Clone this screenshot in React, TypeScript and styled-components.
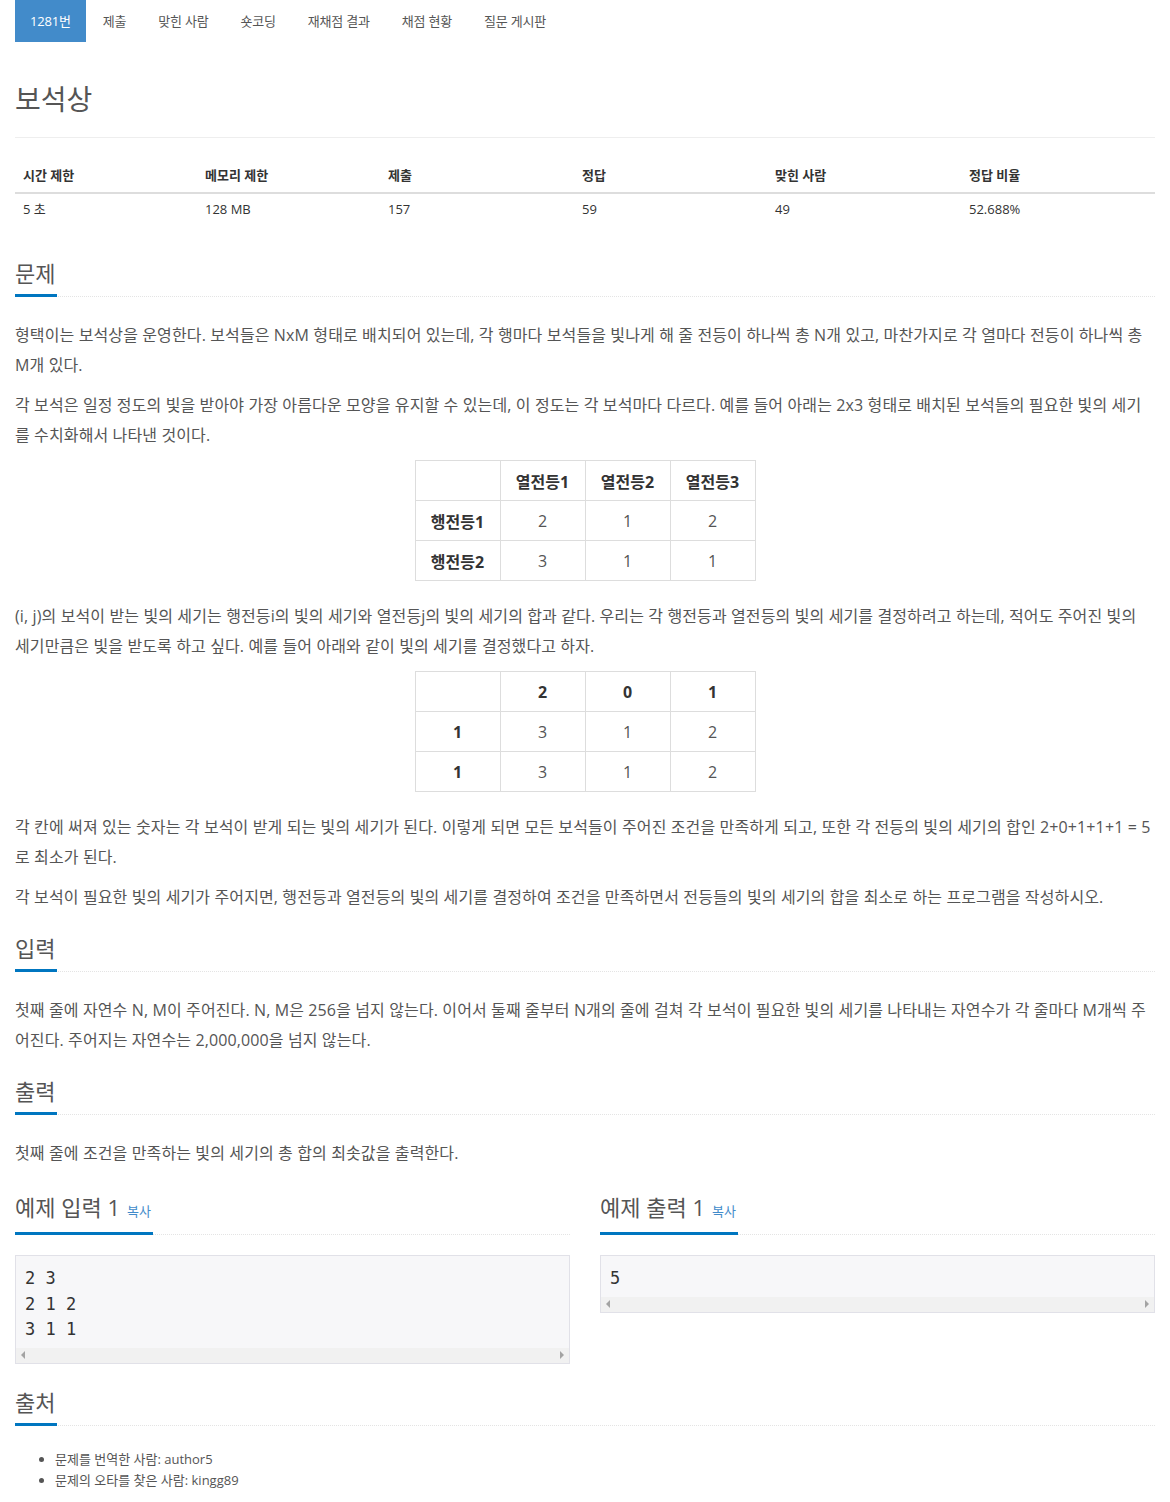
import React from "react";
import styled, { createGlobalStyle } from "styled-components";

const Global = createGlobalStyle`
  html, body { margin: 0; padding: 0; background: #fff; }
  body {
    font-family: "Open Sans", "Noto Sans CJK KR", sans-serif;
    color: #333;
    font-size: 14px;
    overflow: hidden;
  }
  * { box-sizing: border-box; }
`;

const Container = styled.div`
  width: 1170px;
  padding: 0 15px;
`;

const Tabs = styled.ul`
  list-style: none;
  margin: 0;
  padding: 0;
  display: flex;
  gap: 2px;
`;

const Tab = styled.li<{ $active?: boolean }>`
  padding: 10px 15px;
  height: 42px;
  line-height: 22px;
  font-size: 13px;
  letter-spacing: -0.2px;
  color: ${(p) => (p.$active ? "#fff" : "#555")};
  background: ${(p) => (p.$active ? "#428bca" : "transparent")};
`;

const PageHeader = styled.div`
  margin-top: 40px;
  padding-bottom: 21px;
  border-bottom: 1px solid #eee;
  margin-bottom: 20px;
`;

const Title = styled.h1`
  margin: 0;
  font-size: 28px;
  line-height: 34px;
  font-weight: 400;
  color: #555;
`;

const StatsTable = styled.table`
  width: 100%;
  border-collapse: collapse;
  table-layout: fixed;
  margin-bottom: 20px;
  font-size: 13px;
  color: #333;
`;

const StatCol = styled.col<{ $w: number }>`
  width: ${(p) => p.$w}px;
`;

const StatTh = styled.th`
  text-align: left;
  font-weight: 700;
  padding: 8px;
  line-height: 18px;
  border-bottom: 2px solid #ddd;
`;

const StatTd = styled.td`
  padding: 6px 8px 9px;
  line-height: 18px;
`;

const Section = styled.section<{ $gap?: number }>`
  padding-top: ${(p) => p.$gap ?? 16}px;
`;

const Headline = styled.div<{ $space?: number }>`
  border-bottom: 1px dotted #e4e4e4;
  margin-bottom: ${(p) => p.$space ?? 23}px;
  display: flex;
  align-items: flex-end;
`;

const H2 = styled.h2`
  display: inline-block;
  margin: 0 0 -1px;
  font-size: 22px;
  line-height: 22px;
  font-weight: 400;
  color: #555;
  padding: 0 2px 10px 0;
  border-bottom: 3px solid #0076c0;
`;

const Copy = styled.a`
  font-size: 13px;
  color: #428bca;
  text-decoration: none;
  margin-left: 7px;
`;

const Text = styled.p`
  margin: 0 0 10px;
  font-size: 16px;
  line-height: 30px;
  letter-spacing: 0.12px;
  color: #555;
  word-break: break-all;
`;

const DataTable = styled.table`
  border-collapse: collapse;
  margin: 0 auto 20px;
  width: 341px;
  table-layout: fixed;
  font-size: 16px;
  color: #555;
`;

const Cell = styled.td<{ $head?: boolean }>`
  width: 85px;
  height: 40px;
  padding: 0;
  border: 1px solid #ddd;
  text-align: center;
  font-weight: ${(p) => (p.$head ? 700 : 400)};
  color: ${(p) => (p.$head ? "#333" : "#555")};
`;

const SampleRow = styled.div`
  display: grid;
  grid-template-columns: 1fr 1fr;
  column-gap: 30px;
`;

const PreBox = styled.div`
  margin: 0 0 10px;
  background: #f7f7f9;
  border: 1px solid #e1e1e8;
`;

const Pre = styled.pre`
  margin: 0;
  padding: 10px 9px 5px;
  font-family: "DejaVu Sans Mono", monospace;
  font-size: 17px;
  line-height: 25.5px;
  color: #333;
  white-space: pre;
`;

const ScrollTrack = styled.div`
  height: 15px;
  background: #f1f1f1;
  display: flex;
  align-items: center;
  justify-content: space-between;
  padding: 0 5px;
`;

const Arrow = styled.span<{ $dir: "left" | "right" }>`
  width: 0;
  height: 0;
  border-top: 4px solid transparent;
  border-bottom: 4px solid transparent;
  ${(p) =>
    p.$dir === "left"
      ? "border-right: 4px solid #a3a3a3;"
      : "border-left: 4px solid #a3a3a3;"}
`;

const List = styled.ul`
  margin: 0;
  padding-left: 40px;
  font-size: 13px;
  line-height: 21px;
  color: #555;
`;

const tabs = ["1281번", "제출", "맞힌 사람", "숏코딩", "재채점 결과", "채점 현황", "질문 게시판"];
const statHeads = ["시간 제한", "메모리 제한", "제출", "정답", "맞힌 사람", "정답 비율"];
const statVals = ["5 초", "128 MB", "157", "59", "49", "52.688%"];
const statWidths = [182, 183, 194, 193, 194, 194];

type Grid = { head: string[]; rows: string[][] };
const grid1: Grid = {
  head: ["", "열전등1", "열전등2", "열전등3"],
  rows: [
    ["행전등1", "2", "1", "2"],
    ["행전등2", "3", "1", "1"],
  ],
};
const grid2: Grid = {
  head: ["", "2", "0", "1"],
  rows: [
    ["1", "3", "1", "2"],
    ["1", "3", "1", "2"],
  ],
};

function LightTable({ g }: { g: Grid }) {
  return (
    <DataTable>
      <tbody>
        <tr>
          {g.head.map((h, i) => (
            <Cell key={i} $head>
              {h}
            </Cell>
          ))}
        </tr>
        {g.rows.map((r, ri) => (
          <tr key={ri}>
            {r.map((c, ci) => (
              <Cell key={ci} $head={ci === 0}>
                {c}
              </Cell>
            ))}
          </tr>
        ))}
      </tbody>
    </DataTable>
  );
}

function Sample({ title, data }: { title: string; data: string }) {
  return (
    <Section $gap={18}>
      <Headline $space={20}>
        <H2>
          {title}
          <Copy>복사</Copy>
        </H2>
      </Headline>
      <PreBox>
        <Pre>{data}</Pre>
        <ScrollTrack>
          <Arrow $dir="left" />
          <Arrow $dir="right" />
        </ScrollTrack>
      </PreBox>
    </Section>
  );
}

export default function App() {
  return (
    <Container>
      <Global />
      <Tabs>
        {tabs.map((t, i) => (
          <Tab key={t} $active={i === 0}>
            {t}
          </Tab>
        ))}
      </Tabs>
      <PageHeader>
        <Title>보석상</Title>
      </PageHeader>
      <StatsTable>
        <colgroup>
          {statWidths.map((w, i) => (
            <StatCol key={i} $w={w} />
          ))}
        </colgroup>
        <thead>
          <tr>
            {statHeads.map((h) => (
              <StatTh key={h}>{h}</StatTh>
            ))}
          </tr>
        </thead>
        <tbody>
          <tr>
            {statVals.map((v) => (
              <StatTd key={v}>{v}</StatTd>
            ))}
          </tr>
        </tbody>
      </StatsTable>

      <Section $gap={15}>
        <Headline>
          <H2>문제</H2>
        </Headline>
        <Text>
          형택이는 보석상을 운영한다. 보석들은 NxM 형태로 배치되어 있는데, 각 행마다 보석들을 빛나게 해 줄 전등이 하나씩 총 N개 있고, 마찬가지로 각 열마다 전등이 하나씩 총 M개 있다.
        </Text>
        <Text>
          각 보석은 일정 정도의 빛을 받아야 가장 아름다운 모양을 유지할 수 있는데, 이 정도는 각 보석마다 다르다. 예를 들어 아래는 2x3 형태로 배치된 보석들의 필요한 빛의 세기를 수치화해서 나타낸 것이다.
        </Text>
        <LightTable g={grid1} />
        <Text>
          (i, j)의 보석이 받는 빛의 세기는 행전등i의 빛의 세기와 열전등j의 빛의 세기의 합과 같다. 우리는 각 행전등과 열전등의 빛의 세기를 결정하려고 하는데, 적어도 주어진 빛의 세기만큼은 빛을 받도록 하고 싶다. 예를 들어 아래와 같이 빛의 세기를 결정했다고 하자.
        </Text>
        <LightTable g={grid2} />
        <Text>
          각 칸에 써져 있는 숫자는 각 보석이 받게 되는 빛의 세기가 된다. 이렇게 되면 모든 보석들이 주어진 조건을 만족하게 되고, 또한 각 전등의 빛의 세기의 합인 2+0+1+1+1 = 5로 최소가 된다.
        </Text>
        <Text>
          각 보석이 필요한 빛의 세기가 주어지면, 행전등과 열전등의 빛의 세기를 결정하여 조건을 만족하면서 전등들의 빛의 세기의 합을 최소로 하는 프로그램을 작성하시오.
        </Text>
      </Section>

      <Section $gap={15}>
        <Headline>
          <H2>입력</H2>
        </Headline>
        <Text>
          첫째 줄에 자연수 N, M이 주어진다. N, M은 256을 넘지 않는다. 이어서 둘째 줄부터 N개의 줄에 걸쳐 각 보석이 필요한 빛의 세기를 나타내는 자연수가 각 줄마다 M개씩 주어진다. 주어지는 자연수는 2,000,000을 넘지 않는다.
        </Text>
      </Section>

      <Section $gap={15}>
        <Headline>
          <H2>출력</H2>
        </Headline>
        <Text>첫째 줄에 조건을 만족하는 빛의 세기의 총 합의 최솟값을 출력한다.</Text>
      </Section>

      <SampleRow>
        <Sample title="예제 입력 1" data={"2 3\n2 1 2\n3 1 1"} />
        <Sample title="예제 출력 1" data={"5"} />
      </SampleRow>

      <Section $gap={17}>
        <Headline>
          <H2>출처</H2>
        </Headline>
        <List>
          <li>문제를 번역한 사람: author5</li>
          <li>문제의 오타를 찾은 사람: kingg89</li>
        </List>
      </Section>
    </Container>
  );
}
